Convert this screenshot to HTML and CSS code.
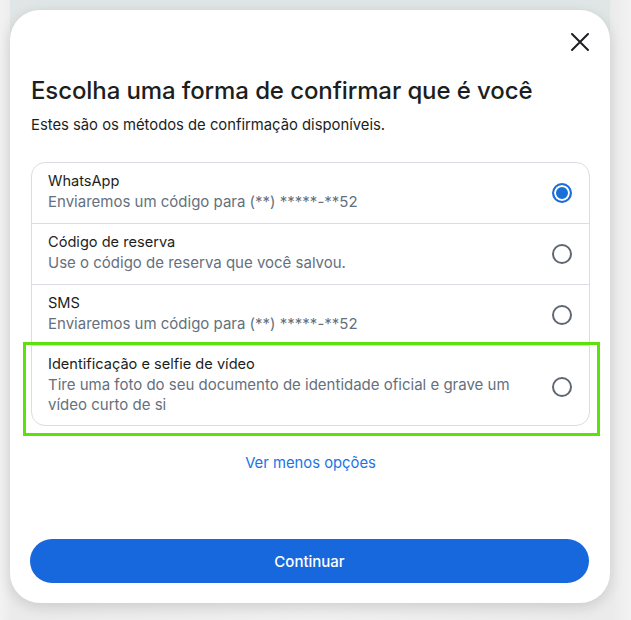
FILE: index.html
```html
<!DOCTYPE html>
<html lang="pt">
<head>
<meta charset="utf-8">
<link rel="stylesheet" href="styles.css">
</head>
<body>
<div class="backdrop">
  <div class="modal">
    <div class="top">
      <button class="close" aria-label="Fechar">
        <svg width="20" height="20" viewBox="0 0 20 20"><path d="M2 2 L18 18 M18 2 L2 18" stroke="#1c1e21" stroke-width="2" fill="none" stroke-linecap="round"/></svg>
      </button>
    </div>
    <h1 class="title">Escolha uma forma de confirmar que é você</h1>
    <p class="sub">Estes são os métodos de confirmação disponíveis.</p>
    <div class="list">
      <div class="row">
        <div class="text">
          <div class="rt">WhatsApp</div>
          <div class="rs">Enviaremos um código para (**) *****-**52</div>
        </div>
        <span class="radio on"></span>
      </div>
      <div class="row">
        <div class="text">
          <div class="rt">Código de reserva</div>
          <div class="rs">Use o código de reserva que você salvou.</div>
        </div>
        <span class="radio"></span>
      </div>
      <div class="row">
        <div class="text">
          <div class="rt">SMS</div>
          <div class="rs">Enviaremos um código para (**) *****-**52</div>
        </div>
        <span class="radio"></span>
      </div>
      <div class="row last">
        <div class="text">
          <div class="rt">Identificação e selfie de vídeo</div>
          <div class="rs">Tire uma foto do seu documento de identidade oficial e grave um vídeo curto de si</div>
        </div>
        <span class="radio"></span>
        <span class="highlight"></span>
      </div>
    </div>
    <div class="more"><a href="#">Ver menos opções</a></div>
    <div class="spacer"></div>
    <button class="cta">Continuar</button>
  </div>
</div>
</body>
</html>
```
FILE: styles.css
```css
* { box-sizing: border-box; }
html, body { margin: 0; padding: 0; }
body {
  width: 631px;
  height: 620px;
  background: linear-gradient(90deg, #f2f2f2 0%, #ebebeb 2%, #f0f0f0 50%, #ebebeb 97%, #f2f2f2 100%);
  font-family: Inter, "Noto Sans", sans-serif;
  overflow: hidden;
}
.backdrop {
  margin: 0 21px 0 10px;
  height: 620px;
  background: linear-gradient(180deg, #dfe6e5 0, #dfe6e5 40px, transparent 40px);
  padding-top: 10px;
}
.modal {
  background: #fff;
  border-radius: 30px;
  height: 593px;
  box-shadow: 0 4px 14px rgba(0,0,0,0.14);
  padding: 0 20px 20px 21px;
  display: flex;
  flex-direction: column;
}
.top {
  display: flex;
  justify-content: flex-end;
  padding-top: 22px;
  height: 58px;
}
.close {
  border: 0;
  background: none;
  padding: 0;
  width: 20px;
  height: 20px;
  cursor: pointer;
}
.close svg { display: block; }
.title {
  margin: 8px 0 0;
  font-size: 24px;
  font-weight: 500;
  line-height: 30px;
  color: #1c1e21;
  letter-spacing: -0.1px;
}
.sub {
  margin: 9px 0 0;
  font-size: 14.8px;
  line-height: 20px;
  color: #1c1e21;
}
.list {
  margin-top: 27px;
  border: 1px solid #dadde1;
  border-radius: 14px;
}
.row {
  position: relative;
  display: flex;
  align-items: center;
  gap: 16px;
  padding: 7px 17px 11px 16px;
  border-bottom: 1px solid #dadde1;
  min-height: 61px;
}
.row.last { border-bottom: 0; min-height: 79px; padding-top: 8px; padding-bottom: 10px; }
.text { flex: 1; }
.rt {
  font-size: 14.6px;
  line-height: 20px;
  color: #1c1e21;
}
.rs {
  font-size: 15px;
  line-height: 20px;
  color: #65707d;
  margin-top: 1px;
}
.radio {
  width: 20px;
  height: 20px;
  border-radius: 50%;
  border: 2px solid #5f6872;
  flex: none;
  position: relative;
  top: 2px;
}
.radio.on {
  border-color: #1a6ed8;
  background: #1a6ed8;
  box-shadow: inset 0 0 0 2px #fff;
}
.highlight {
  position: absolute;
  left: -9px;
  right: -11px;
  top: -4px;
  bottom: -11px;
  border: 3px solid #5ee00c;
  pointer-events: none;
}
.more {
  text-align: center;
  margin-top: 26px;
}
.more a {
  color: #1b74e4;
  font-size: 14.8px;
  line-height: 20px;
  text-decoration: none;
}
.spacer { flex: 1; }
.cta {
  width: 559px;
  height: 44px;
  margin-left: -1px;
  border: 0;
  border-radius: 22px;
  background: #1868dd;
  color: #fff;
  font-family: Inter, "Noto Sans", sans-serif;
  font-size: 15px;
  font-weight: 500;
  cursor: pointer;
}
```
